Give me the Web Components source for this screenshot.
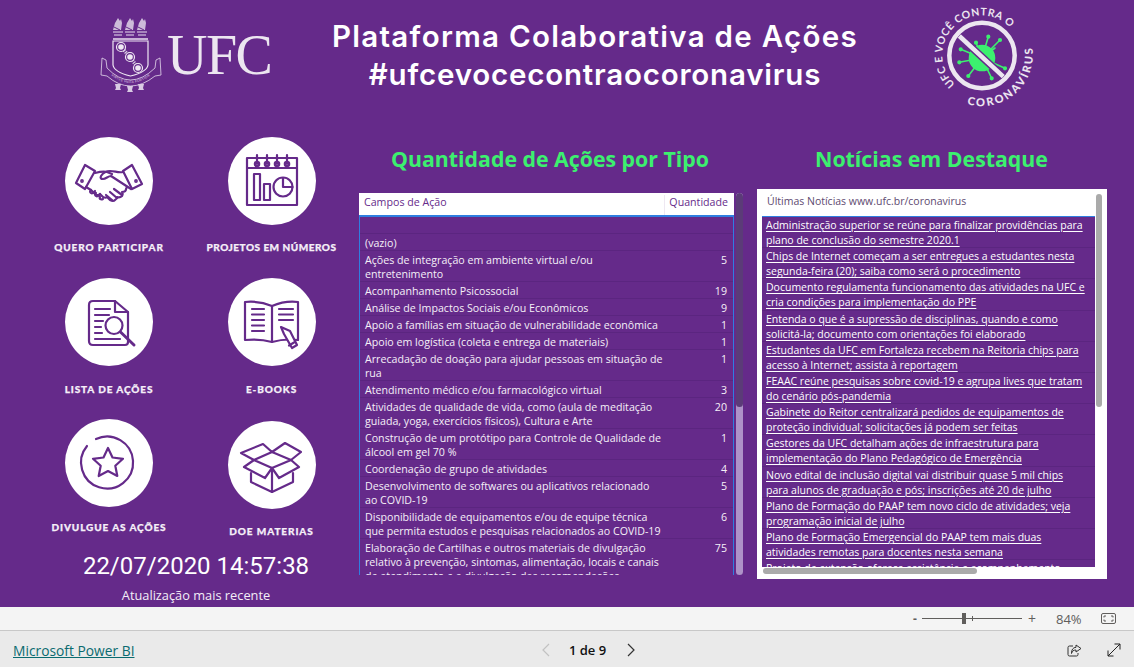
<!DOCTYPE html>
<html lang="pt-BR">
<head>
<meta charset="UTF-8">
<title>Plataforma Colaborativa de Ações</title>
<style>
  html, body { margin: 0; padding: 0; height: 100%; overflow: hidden; }
  body { font-family: "Open Sans", "Liberation Sans", sans-serif; }
</style>
</head>
<body>
<pbi-report>
  <pbi-header slot="header"></pbi-header>
  <div slot="tiles" style="display:contents">
    <nav-tile icon="hands">QUERO PARTICIPAR</nav-tile>
    <nav-tile icon="chart" style="--ls:.5px">PROJETOS EM NÚMEROS</nav-tile>
    <nav-tile icon="doc" style="--gap:17px">LISTA DE AÇÕES</nav-tile>
    <nav-tile icon="book" style="--gap:17px">E-BOOKS</nav-tile>
    <nav-tile icon="star" style="--gap:14px">DIVULGUE AS AÇÕES</nav-tile>
    <nav-tile icon="box" style="--dy:2px">DOE MATERIAS</nav-tile>
  </div>
  <pbi-table slot="table">
    <pbi-row></pbi-row>
    <pbi-row>(vazio)</pbi-row>
    <pbi-row qty="5">Ações de integração em ambiente virtual e/ou
entretenimento</pbi-row>
    <pbi-row qty="19">Acompanhamento Psicossocial</pbi-row>
    <pbi-row qty="9">Análise de Impactos Sociais e/ou Econômicos</pbi-row>
    <pbi-row qty="1">Apoio a famílias em situação de vulnerabilidade econômica</pbi-row>
    <pbi-row qty="1">Apoio em logística (coleta e entrega de materiais)</pbi-row>
    <pbi-row qty="1">Arrecadação de doação para ajudar pessoas em situação de
rua</pbi-row>
    <pbi-row qty="3">Atendimento médico e/ou farmacológico virtual</pbi-row>
    <pbi-row qty="20">Atividades de qualidade de vida, como (aula de meditação
guiada, yoga, exercícios físicos), Cultura e Arte</pbi-row>
    <pbi-row qty="1">Construção de um protótipo para Controle de Qualidade de
álcool em gel 70 %</pbi-row>
    <pbi-row qty="4">Coordenação de grupo de atividades</pbi-row>
    <pbi-row qty="5">Desenvolvimento de softwares ou aplicativos relacionado
ao COVID-19</pbi-row>
    <pbi-row qty="6">Disponibilidade de equipamentos e/ou de equipe técnica
que permita estudos e pesquisas relacionados ao COVID-19</pbi-row>
    <pbi-row qty="75">Elaboração de Cartilhas e outros materiais de divulgação
relativo à prevenção, sintomas, alimentação, locais e canais
de atendimento e a divulgação das recomendações</pbi-row>
  </pbi-table>
  <pbi-news slot="news">
    <news-item>Administração superior se reúne para finalizar providências para
plano de conclusão do semestre 2020.1</news-item>
    <news-item>Chips de Internet começam a ser entregues a estudantes nesta
segunda-feira (20); saiba como será o procedimento</news-item>
    <news-item>Documento regulamenta funcionamento das atividades na UFC e
cria condições para implementação do PPE</news-item>
    <news-item>Entenda o que é a supressão de disciplinas, quando e como
solicitá-la; documento com orientações foi elaborado</news-item>
    <news-item>Estudantes da UFC em Fortaleza recebem na Reitoria chips para
acesso à Internet; assista à reportagem</news-item>
    <news-item>FEAAC reúne pesquisas sobre covid-19 e agrupa lives que tratam
do cenário pós-pandemia</news-item>
    <news-item>Gabinete do Reitor centralizará pedidos de equipamentos de
proteção individual; solicitações já podem ser feitas</news-item>
    <news-item>Gestores da UFC detalham ações de infraestrutura para
implementação do Plano Pedagógico de Emergência</news-item>
    <news-item>Novo edital de inclusão digital vai distribuir quase 5 mil chips
para alunos de graduação e pós; inscrições até 20 de julho</news-item>
    <news-item>Plano de Formação do PAAP tem novo ciclo de atividades; veja
programação inicial de julho</news-item>
    <news-item>Plano de Formação Emergencial do PAAP tem mais duas
atividades remotas para docentes nesta semana</news-item>
    <news-item>Projeto de extensão oferece assistência e acompanhamento psicológico</news-item>
  </pbi-news>
  <pbi-zoombar slot="zoombar"></pbi-zoombar>
  <pbi-footer slot="footer"></pbi-footer>
</pbi-report>

<script>
  const P = '#652a8a';

  // icones dos botoes, viewBox 88x88 igual ao circulo branco
  const ICONS = {
    hands: `
      <path d="M20 28l10 6-10 18-9-6z"/><path d="M67 28l10 19-10 5-9-18z"/>
      <circle cx="17" cy="44" r=".8"/><circle cx="71" cy="44" r=".8"/>
      <path d="M30 36c4-1 8-2 12-1l5 2"/>
      <path d="M58 35c-5 1-8-1-13-1-4 0-7 2-9 5-1 2 0 3 2 3 3 0 5-3 8-3l20 13"/>
      <path d="M21 50l5 3 4 4c2 2 4 1 5 0l3 3c2 1 3 1 4 0l3 3c2 1 4 1 5 0 2-1 2-2 2-3 2 1 4 0 5-1 1-2 1-3 0-4 2 0 4-1 4-3l1-2"/>
      <path d="M26 53c-2 2 0 4 2 3l2-2M31 56c-2 2 0 4 2 3l2-2M35 60c-1 2 1 3 3 2M49 52l8 6M45 55l7 6M41 58l6 5"/>`,
    chart: `
      <rect x="19" y="21" width="50" height="47"/>
      <path d="M19 31h50"/>
      <path d="M29 18v9M39 18v9M49 18v9M59 18v9"/>
      <circle cx="29" cy="27" r="2.2"/><circle cx="39" cy="27" r="2.2"/><circle cx="49" cy="27" r="2.2"/><circle cx="59" cy="27" r="2.2"/>
      <rect x="26" y="37" width="6" height="26"/><rect x="36" y="47" width="6" height="16"/>
      <circle cx="55" cy="50" r="9.5"/><path d="M55 41v9h9.5"/>`,
    doc: `
      <path d="M50 23H28q-4 0-4 4v36q0 4 4 4h32q3 0 3-3V34z"/>
      <path d="M50 23v11h13"/>
      <path d="M30 31h15M30 37h14M30 43h8M30 49h6M30 55h7M30 61h25"/>
      <circle cx="49" cy="47.500" r="8.500"/>
      <path d="M55.500 54l13.500 13" stroke-width="3"/>`,
    book: `
      <path d="M44 28c-7-3-17-5-27-4v38c10-1 20 0 27 2 7-2 18-3 26-2V24c-8-1-19 1-26 4z"/>
      <path d="M44 28v36"/>
      <path d="M24 31h12M24 36.500h12M24 42h12M24 47.500h12M24 53h12M51 31h14M51 36.500h14M51 42h14"/>
      <path d="M53 49l9 4 7 14-5 3-8-14z" fill="#fff"/><path d="M61 67.500l5-3"/>`,
    star: `
      <path d="M22 27a26 26 0 1 0 9-7"/>
      <path d="M43 29l4.500 9.500 10.500 1.300-7.700 7 2 10.200-9.300-5-9.300 5 2-10.200-7.700-7 10.500-1.300z"/>`,
    box: `
      <path d="M23 52v9l21 10 21-10v-9"/>
      <path d="M44 47v24"/>
      <path d="M44 31l-18 8 18 8 19-8z"/>
      <path d="M26 39l-10 7 21 11 7-10 7 10 20-11-8-7"/>
      <path d="M26 39l-13-7 22-9 9 8 13-9 16 9-10 8"/>`
  };

  class PbiReport extends HTMLElement {
    constructor() {
      super();
      this.attachShadow({ mode: 'open' }).innerHTML = `
        <style>
          :host { display: flex; flex-direction: column; width: 1134px; height: 667px; color: #fff; overflow: hidden; }
          .canvas { height: 607px; flex: none; background: ${P}; display: flex; flex-direction: column; }
          .body { display: grid; grid-template-columns: 359px 398px 377px; flex: 1; min-height: 0; }
          .left { padding: 11px 0 0 28px; display: flex; flex-direction: column; }
          .tiles { display: grid; grid-template-columns: 162px 163px; grid-auto-rows: 141px; }
          .stamp { text-align: center; width: 336px; margin-top: -9px; }
          .date { font: 400 24px/30px Roboto, "Liberation Sans", sans-serif; }
          .upd { font: 400 12.800px/16px "Open Sans", sans-serif; margin-top: 6px; color: #f3edf7; }
          .mid, .right { display: flex; flex-direction: column; }
          h2 { margin: 0; font: 700 21.300px/30px "Open Sans", sans-serif; color: #3cf06f; text-align: center; white-space: nowrap; }
          .mid h2 { padding: 18px 16px 0 0; height: 49px; }
          .right h2 { padding: 18px 28px 0 0; height: 46px; }
        </style>
        <div class="canvas">
          <slot name="header"></slot>
          <div class="body">
            <div class="left">
              <div class="tiles"><slot name="tiles"></slot></div>
              <div class="stamp">
                <div class="date">22/07/2020 14:57:38</div>
                <div class="upd">Atualização mais recente</div>
              </div>
            </div>
            <div class="mid"><h2>Quantidade de Ações por Tipo</h2><slot name="table"></slot></div>
            <div class="right"><h2>Notícias em Destaque</h2><slot name="news"></slot></div>
          </div>
        </div>
        <slot name="zoombar"></slot>
        <slot name="footer"></slot>`;
    }
  }

  class PbiHeader extends HTMLElement {
    constructor() {
      super();
      this.attachShadow({ mode: 'open' }).innerHTML = `
        <style>
          :host { display: grid; grid-template-columns: 330px 530px 1fr; height: 126px; flex: none; }
          .logo { display: flex; align-items: flex-start; padding: 16px 0 0 100px; gap: 5px; }
          .ufc { font: 400 56px/60px "Liberation Serif", serif; color: #ece6f0; letter-spacing: -1.500px; margin-top: 9px; }
          h1 { margin: 17px 0 0; font: 600 29.500px/38px Inter, "Open Sans", sans-serif; text-align: center; white-space: nowrap; }
          h1 span { display: block; }
          .l1 { letter-spacing: 1.300px; }
          .l2 { letter-spacing: .800px; }
          .badge { padding: 0 0 0 50px; }
          svg { display: block; }
        </style>
        <div class="logo">
          <svg width="62" height="78" viewBox="0 0 62 78" fill="none" stroke="#e4d9ec" stroke-width="1">
            <defs><path id="rib" d="M5 54Q30 80 57 54"/></defs>
            <g fill="#cdbcd9" stroke="none">
              <path d="M13 14l2-7 3-5 2 3 1-2 1 4-1 7zM25 14l2-7 3-5 2 3 1-2 1 4-1 7zM37 14l2-7 3-5 2 3 1-2 1 4-1 7z"/>
            </g>
            <path d="M14 11l6 3M26 11l6 3M38 11l6 3" stroke="${P}"/>
            <path d="M13 16h10M14 19h8M25 16h10M26 19h8M37 16h10M38 19h8" stroke="#eadfef"/>
            <path d="M13 23h35" stroke="#eadfef" stroke-width="1.500"/>
            <path d="M13 25h35v24q-1 7-17.500 11Q14 56 13 49z" stroke="#efe8f3" stroke-width="1.200"/>
            <path d="M21 31l9 10 8 11" stroke="#d9cbe3" stroke-width="3.500" stroke-dasharray="1.200 1"/>
            <g fill="${P}" stroke="#efe8f3" stroke-width="1.200"><circle cx="21" cy="31" r="4.500"/><circle cx="30" cy="41" r="4.500"/><circle cx="38" cy="52" r="4.500"/></g>
            <g fill="#efe8f3" stroke="none"><circle cx="21" cy="31" r="2.800"/><circle cx="30" cy="41" r="2.800"/><circle cx="38" cy="52" r="2.800"/></g>
            <path d="M2 42l4 2 1 8Q30 76 55 52l1-8 4-2 1 17-6 1Q30 80 7 60l-6-1z" stroke="#e4d9ec" stroke-width=".8"/>
            <text font-family="Liberation Sans, sans-serif" font-size="3.200" fill="#e4d9ec" stroke="none" letter-spacing=".3"><textPath href="#rib" startOffset="8">VIRTVS VNITA FORTIOR</textPath></text>
            <g fill="#d9cbe3" stroke="none"><path d="M15 68h6l-1 4 1 2h-6l1-2zM27 70h6l-1 4 1 2h-6l1-2zM38 68h6l-1 4 1 2h-6l1-2z"/></g>
          </svg>
          <span class="ufc">UFC</span>
        </div>
        <h1><span class="l1">Plataforma Colaborativa de Ações</span><span class="l2">#ufcevocecontraocoronavirus</span></h1>
        <div class="badge">
          <svg width="140" height="112" viewBox="0 0 140 112" fill="#ece6f0">
            <defs>
              <path id="top" d="M45 84A39.500 39.500 0 1 1 111 50"/>
              <path id="bot" d="M57 104A51 51 0 0 0 121 42"/>
            </defs>
            <g fill="#3cf06f" stroke="#3cf06f" stroke-width="1.600" stroke-linecap="round">
              <circle cx="72" cy="58" r="12.500"/>
              <path d="M72 58L50.700 49.300M72 58L49.300 62.300M72 58L58.300 76M72 58L81.700 78.300M72 58L95 68.300M72 58L90 40M72 58L78.300 36.700M72 58L66 42.700M72 58L85 48" fill="none"/>
              <circle cx="50.700" cy="49.300" r="1.300"/><circle cx="49.300" cy="62.300" r="1.300"/><circle cx="58.300" cy="76" r="1.300"/><circle cx="81.700" cy="78.300" r="1.300"/><circle cx="95" cy="68.300" r="1.300"/><circle cx="90" cy="40" r="1.300"/><circle cx="78.300" cy="36.700" r="1.300"/><circle cx="66" cy="42.700" r="1.300"/>
            </g>
            <circle cx="72" cy="55.500" r="32.700" fill="none" stroke="#ece6f0" stroke-width="4.500"/>
            <path d="M49.300 36L93.300 76.700" stroke="${P}" stroke-width="7.500"/>
            <path d="M49.300 36L93.300 76.700" stroke="#ece6f0" stroke-width="4.500"/>
            <g font-family="Lato, sans-serif" font-weight="700">
              <text font-size="10.500" letter-spacing=".5"><textPath href="#top">UFC E VOCÊ CONTRA O</textPath></text>
              <text font-weight="900" font-size="11" letter-spacing="2.200"><textPath href="#bot">CORONAVÍRUS</textPath></text>
            </g>
          </svg>
        </div>`;
    }
  }

  class NavTile extends HTMLElement {
    constructor() {
      super();
      const icon = ICONS[this.getAttribute('icon')] || '';
      this.attachShadow({ mode: 'open' }).innerHTML = `
        <style>
          :host { display: flex; flex-direction: column; align-items: center; padding-top: var(--dy, 0); }
          .disc { width: 88px; height: 88px; border-radius: 50%; background: #fff; flex: none; }
          svg { display: block; fill: none; stroke: ${P}; stroke-width: 2.200; stroke-linecap: round; stroke-linejoin: round; }
          .label { margin-top: var(--gap, 16px); font: 900 10px/12px Lato, sans-serif; letter-spacing: var(--ls, .9px); color: #f5eff8; white-space: nowrap; -webkit-text-stroke: .25px #f5eff8; }
        </style>
        <div class="disc"><svg width="88" height="88" viewBox="0 0 88 88">${icon}</svg></div>
        <div class="label"><slot></slot></div>`;
    }
  }

  class PbiRow extends HTMLElement {
    constructor() {
      super();
      const qty = this.getAttribute('qty') || '';
      this.attachShadow({ mode: 'open' }).innerHTML = `
        <style>
          :host { display: flex; justify-content: space-between; min-height: 14px; padding: 2px 6px 0 5px; border-bottom: 1px solid #5b2580; line-height: 14px; }
          .name { white-space: pre-line; flex: 1; }
          .qty { flex: none; }
        </style>
        <div class="name"><slot></slot></div><div class="qty">${qty}</div>`;
    }
  }

  class PbiTable extends HTMLElement {
    constructor() {
      super();
      this.attachShadow({ mode: 'open' }).innerHTML = `
        <style>
          :host { display: grid; grid-template-columns: 375px 7px; column-gap: 2px; height: 382px; font: 400 10.650px/14px "Open Sans", sans-serif; color: #f5f0f8; }
          .wrap { display: flex; flex-direction: column; min-height: 0; }
          .head { flex: none; height: 24px; background: #fff; color: ${P}; display: flex; justify-content: space-between; box-sizing: border-box; padding: 2px 6px 0 5px; border-bottom: 2px solid #2f7ee0; }
          .q { border-left: 1px solid #eee8f2; padding-left: 4px; height: 20px; }
          .rows { flex: 1; overflow: hidden; border: solid #2f7ee0; border-width: 0 1px; min-height: 0; }
          .bar { background: #ae92c8; border-radius: 4px; position: relative; overflow: hidden; }
          .thumb { position: absolute; left: 0; right: 0; top: 0; height: 214px; background: #5b3b78; border-radius: 4px; }
        </style>
        <div class="wrap">
          <div class="head"><span>Campos de Ação</span><span class="q">Quantidade</span></div>
          <div class="rows"><slot></slot></div>
        </div>
        <div class="bar"><div class="thumb"></div></div>`;
    }
  }

  class NewsItem extends HTMLElement {
    constructor() {
      super();
      this.attachShadow({ mode: 'open' }).innerHTML = `
        <style>
          :host { display: block; padding: 1px 4px 0 4px; height: 29.200px; border-bottom: 1px solid #5b2580; }
          u { white-space: pre-line; text-decoration-thickness: 1px; text-underline-offset: 1.500px; }
        </style>
        <u><slot></slot></u>`;
    }
  }

  class PbiNews extends HTMLElement {
    constructor() {
      super();
      this.attachShadow({ mode: 'open' }).innerHTML = `
        <style>
          :host { display: block; position: relative; width: 350px; height: 390px; margin-top: -1px; box-sizing: border-box; background: #fff; padding: 0 12px 12px 5px; font: 400 10.500px/15px "Open Sans", sans-serif; color: #fff; }
          .head { height: 28px; box-sizing: border-box; padding: 5px 0 0 5px; color: #5e4a70; border-bottom: 1px solid #2f7ee0; line-height: 14px; }
          .rows { height: 350px; background: ${P}; overflow: hidden; white-space: nowrap; }
          .v { position: absolute; right: 5px; top: 5px; width: 6px; height: 213px; background: #aaa; border-radius: 3px; }
          .h { position: absolute; left: 6px; bottom: 5px; width: 214px; height: 6px; background: #aaa; border-radius: 3px; }
        </style>
        <div class="head">Últimas Notícias www.ufc.br/coronavirus</div>
        <div class="rows"><slot></slot></div>
        <div class="v"></div><div class="h"></div>`;
    }
  }

  class PbiZoombar extends HTMLElement {
    constructor() {
      super();
      this.attachShadow({ mode: 'open' }).innerHTML = `
        <style>
          :host { display: flex; align-items: center; height: 23px; flex: none; background: #f4f4f4; border-bottom: 1px solid #c8c8c8; color: #605e5c; font: 400 12px/16px "Open Sans", sans-serif; padding-left: 913px; }
          .m { width: 9px; font-weight: 700; }
          .track { width: 100px; height: 1px; background: #605e5c; position: relative; }
          .thumb { position: absolute; left: 40px; top: -5px; width: 4px; height: 11px; background: #605e5c; }
          .tick { position: absolute; left: 50px; top: -2px; width: 1px; height: 5px; background: #605e5c; }
          .p { margin-left: 6px; font-size: 14px; width: 20px; }
          .pct { width: 45px; margin-left: 8px; font-size: 13px; }
          svg { display: block; }
        </style>
        <span class="m">-</span>
        <div class="track"><div class="thumb"></div><div class="tick"></div></div>
        <span class="p">+</span>
        <span class="pct">84%</span>
        <svg width="15" height="11" viewBox="0 0 15 11" fill="none" stroke="#605e5c"><rect x=".5" y=".5" width="14" height="10" rx="1.500"/><path d="M3 4.500V3h2M12 4.500V3h-2M3 6.500V8h2M12 6.500V8h-2"/></svg>`;
    }
  }

  class PbiFooter extends HTMLElement {
    constructor() {
      super();
      this.attachShadow({ mode: 'open' }).innerHTML = `
        <style>
          :host { display: grid; grid-template-columns: 540px 97px 1fr; align-items: center; flex: 1; background: #eaeaea; font: 400 13px/16px "Open Sans", sans-serif; color: #222; }
          .brand { padding-top: 4px; }
          a { margin-left: 13px; color: #0a6b70; text-decoration: underline; font-size: 13.800px; }
          .pager { display: flex; justify-content: space-between; align-items: center; padding-top: 2px; }
          .pager span { font-weight: 600; color: #111; margin-left: -2px; }
          .tools { display: flex; justify-content: flex-end; gap: 25px; padding: 2px 13px 0 0; }
          svg { display: block; fill: none; }
        </style>
        <div class="brand"><a href="#">Microsoft Power BI</a></div>
        <div class="pager">
          <svg width="12" height="14" viewBox="0 0 12 14" stroke="#c2c2c2" stroke-width="1.200"><path d="M9 1L3 7l6 6"/></svg>
          <span>1 de 9</span>
          <svg width="12" height="14" viewBox="0 0 12 14" stroke="#333" stroke-width="1.200"><path d="M3 1l6 6-6 6"/></svg>
        </div>
        <div class="tools">
          <svg width="15" height="15" viewBox="0 0 15 15" stroke="#333"><path d="M6 3H2.500A1.500 1.500 0 0 0 1 4.500v7A1.500 1.500 0 0 0 2.500 13h7a1.500 1.500 0 0 0 1.500-1.500V10"/><path d="M9 2l5 3.500L9 9V7C6.500 7 5 8 4.500 10.500 4.500 6.500 6 4.500 9 4.300z"/></svg>
          <svg width="14" height="14" viewBox="0 0 14 14" stroke="#222"><path d="M1 13L13 1M7.500 1H13v5.500M1 7.500V13h5.500"/></svg>
        </div>`;
    }
  }

  customElements.define('pbi-report', PbiReport);
  customElements.define('pbi-header', PbiHeader);
  customElements.define('nav-tile', NavTile);
  customElements.define('pbi-row', PbiRow);
  customElements.define('pbi-table', PbiTable);
  customElements.define('news-item', NewsItem);
  customElements.define('pbi-news', PbiNews);
  customElements.define('pbi-zoombar', PbiZoombar);
  customElements.define('pbi-footer', PbiFooter);
</script>
</body>
</html>
